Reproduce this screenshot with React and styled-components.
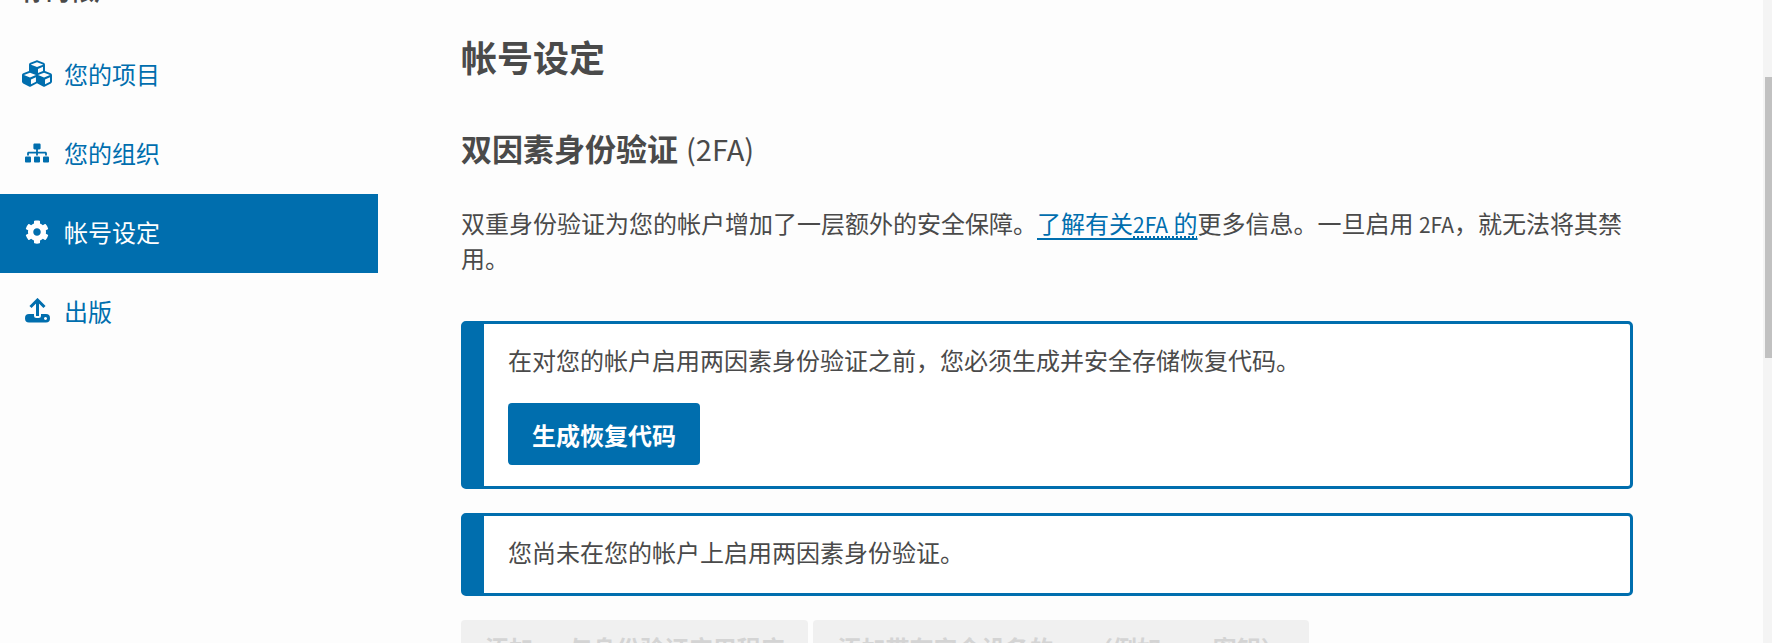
import React from 'react';
import styled, { createGlobalStyle } from 'styled-components';
import { FaCubes, FaSitemap, FaCog } from 'react-icons/fa';

const BLUE = '#006eae';
const INK = '#4a4a4a';

const Global = createGlobalStyle`
  html, body { margin: 0; padding: 0; height: 643px; overflow: hidden; background: #fdfdfd; }
  body { font-family: "Noto Sans CJK SC", "Noto Sans", sans-serif; color: ${INK}; }
`;

const Page = styled.div`
  position: relative;
  display: flex;
  height: 643px;
  overflow: hidden;
`;

const Sidebar = styled.nav`
  width: 378px;
  flex: none;
  margin-top: -27px;
`;

const SideTitle = styled.div`
  font-size: 24px;
  line-height: 34px;
  font-weight: 700;
  padding-left: 22px;
  height: 63px;
`;

const SideItem = styled.a`
  box-sizing: border-box;
  display: flex;
  align-items: center;
  height: 79px;
  padding: 0 0 4px 22px;
  gap: 12px;
  font-size: 24px;
  color: ${p => (p.$active ? '#fff' : BLUE)};
  background: ${p => (p.$active ? BLUE : 'transparent')};
`;

const IconBox = styled.span`
  display: flex;
  justify-content: center;
  width: 30px;
  font-size: ${p => p.$size || 24}px;
`;

const Main = styled.main`
  flex: none;
  width: 1172px;
  margin-left: 83px;
  padding-top: 31px;
`;

const Title = styled.h1`
  margin: 0;
  font-size: 36px;
  line-height: 50px;
  font-weight: 700;
`;

const SubTitle = styled.h2`
  margin: 45px 0 0;
  font-size: 31px;
  line-height: 44px;
  font-weight: 700;
`;

const Light = styled.span`
  margin-left: 8px;
  font-size: 29px;
  font-weight: 400;
`;

const Intro = styled.p`
  margin: 36px 0 0;
  font-size: 24px;
  line-height: 34px;
`;

const SmallLatin = styled.span`
  font-size: ${p => p.$size || 21}px;
`;

const TextLink = styled.a`
  color: ${BLUE};
  text-decoration: underline 2px;
  text-underline-offset: 5px;
`;

const Dotted = styled.span`
  text-decoration: underline dotted 2px;
  text-underline-offset: 3px;
`;

const Notice = styled.div`
  box-sizing: border-box;
  margin-top: ${p => p.$top}px;
  border: 3px solid ${BLUE};
  border-left-width: 23px;
  border-radius: 5px;
  padding: ${p => p.$pad};
  background: #fff;
  font-size: 24px;
  line-height: 34px;
`;

const PrimaryButton = styled.button`
  display: block;
  margin-top: 26px;
  height: 62px;
  padding: 0 24px;
  border: 0;
  border-radius: 4px;
  background: ${BLUE};
  color: #fff;
  font: 700 24px "Noto Sans CJK SC", sans-serif;
`;

const Actions = styled.div`
  display: flex;
  gap: 5px;
  margin-top: 24px;
`;

const GhostButton = styled.button`
  height: 62px;
  padding: 0 24px 8px 24px;
  border: 0;
  border-radius: 4px;
  background: #f0f0f0;
  color: #d4d4d4;
  font: 700 24px "Noto Sans CJK SC", sans-serif;
  white-space: nowrap;
`;

const Track = styled.div`
  position: absolute;
  top: 0;
  right: 0;
  bottom: 0;
  width: 9px;
  background: #f4f4f4;
`;

const Thumb = styled.div`
  position: absolute;
  top: 77px;
  left: 2px;
  right: 0;
  height: 281px;
  background: #c1c1c1;
`;

function PublishIcon() {
  return (
    <svg width="25" height="25" viewBox="0 0 25 25" aria-hidden="true">
      <path
        fill="none"
        stroke="currentColor"
        strokeWidth="3"
        d="M12.5 2 V18 M5.5 9 L12.5 2 L19.5 9"
      />
      <path
        fill="currentColor"
        fillRule="evenodd"
        d="M4 16 H9 V17.5 Q9 20 11.5 20 H13.5 Q16 20 16 17.5 V16 H21 Q25 16 25 20.2 Q25 24.5 21 24.5 H4 Q0 24.5 0 20.2 Q0 16 4 16 Z M20.5 19 a1.5 1.5 0 1 0 0.01 0 Z"
      />
    </svg>
  );
}

export default function App() {
  return (
    <Page>
      <Global />
      <Sidebar>
        <SideTitle>你的帐户</SideTitle>
        <SideItem><IconBox $size={31}><FaCubes /></IconBox>您的项目</SideItem>
        <SideItem><IconBox><FaSitemap /></IconBox>您的组织</SideItem>
        <SideItem $active><IconBox><FaCog /></IconBox>帐号设定</SideItem>
        <SideItem><IconBox><PublishIcon /></IconBox>出版</SideItem>
      </Sidebar>
      <Main>
        <Title>帐号设定</Title>
        <SubTitle>双因素身份验证<Light>(2FA)</Light></SubTitle>
        <Intro>
          双重身份验证为您的帐户增加了一层额外的安全保障。<TextLink>了解有关<Dotted><SmallLatin>2FA</SmallLatin> 的</Dotted></TextLink>更多信息。一旦启用 <SmallLatin>2FA</SmallLatin>，就无法将其禁用。
        </Intro>
        <Notice $top={46} $pad="19px 24px 21px">
          在对您的帐户启用两因素身份验证之前，您必须生成并安全存储恢复代码。
          <PrimaryButton>生成恢复代码</PrimaryButton>
        </Notice>
        <Notice $top={24} $pad="19px 24px 24px">您尚未在您的帐户上启用两因素身份验证。</Notice>
        <Actions>
          <GhostButton>添加<SmallLatin $size={20}>2FA</SmallLatin>与身份验证应用程序</GhostButton>
          <GhostButton>添加带有安全设备的<SmallLatin $size={20}>2FA</SmallLatin>（例如 <SmallLatin $size={20}>USB</SmallLatin> 密钥）</GhostButton>
        </Actions>
      </Main>
      <Track><Thumb /></Track>
    </Page>
  );
}
